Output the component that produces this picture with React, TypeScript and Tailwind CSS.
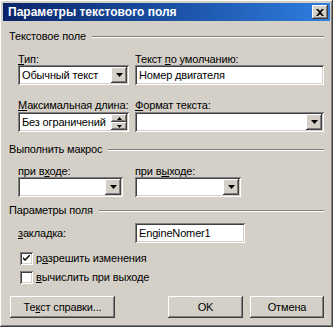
import React from 'react';

const raised =
  'bg-[#d4d0c8] shadow-[inset_-1px_-1px_#404040,inset_1px_1px_#ffffff,inset_-2px_-2px_#808080,inset_2px_2px_#d4d0c8]';
const sunken =
  'bg-white shadow-[inset_1px_1px_#808080,inset_-1px_-1px_#ffffff,inset_2px_2px_#404040,inset_-2px_-2px_#d4d0c8]';

const Arrow = () => (
  <svg width="7" height="4" viewBox="0 0 7 4">
    <path d="M0 0h7L3.5 4z" fill="#000" />
  </svg>
);

const DropBtn = () => (
  <div className={`w-4 h-full flex items-center justify-center ${raised}`}>
    <Arrow />
  </div>
);

const Select = ({ text, className }: { text?: string; className: string }) => (
  <div className={`h-[20px] flex items-stretch p-[2px] ${sunken} ${className}`}>
    <div className="flex-1 pl-[2px] flex items-center leading-none">{text}</div>
    <DropBtn />
  </div>
);

const Spinner = () => (
  <div className="w-4 h-full flex flex-col">
    <div className={`flex-1 flex items-center justify-center ${raised}`}>
      <svg width="5" height="3" viewBox="0 0 5 3"><path d="M2.5 0L5 3H0z" fill="#000" /></svg>
    </div>
    <div className={`flex-1 flex items-center justify-center ${raised}`}>
      <svg width="5" height="3" viewBox="0 0 5 3"><path d="M0 0h5L2.5 3z" fill="#000" /></svg>
    </div>
  </div>
);

const Group = ({ title }: { title: string }) => (
  <div className="flex items-center h-[13px]">
    <span className="pr-[6px]">{title}</span>
    <div className="flex-1 h-[2px] border-t border-t-[#808080] border-b border-b-white" />
  </div>
);

const Check = ({ checked }: { checked?: boolean }) => (
  <div className={`w-[13px] h-[13px] flex items-center justify-center ${sunken}`}>
    {checked && (
      <svg width="7" height="7" viewBox="0 0 7 7">
        <path d="M0 2l2 2 5-5v2l-5 5-2-2z" fill="#000" />
      </svg>
    )}
  </div>
);

const Btn = ({ children, className }: { children: React.ReactNode; className: string }) => (
  <div className={`h-[22px] flex items-center justify-center ${raised} ${className}`}>{children}</div>
);

export default function App() {
  return (
    <div
      className={`w-[333px] h-[327px] p-[3px] flex flex-col text-[11px] tracking-[-0.15px] text-black ${raised}`}
      style={{ fontFamily: '"Liberation Sans", Arial, sans-serif' }}
    >
      {/* Title bar */}
      <div className="h-[18px] flex items-center pl-[5px] pr-[2px] bg-gradient-to-r from-[#0a246a] to-[#2f7ee0]">
        <span className="flex-1 text-white font-bold text-[12px] tracking-normal">Параметры текстового поля</span>
        <div className={`w-4 h-[14px] flex items-center justify-center ${raised}`}>
          <svg width="8" height="7" viewBox="0 0 8 7">
            <path d="M0 0h2l2 2 2-2h2L5 3.5 8 7H6L4 5 2 7H0l3-3.5z" fill="#000" />
          </svg>
        </div>
      </div>

      <div className="flex-1 flex flex-col pl-[6px] pr-[6px] pt-[9px]">
        <Group title="Текстовое поле" />

        {/* type + default text */}
        <div className="flex pl-[9px] mt-[8px] gap-[6px]">
          <div className="flex flex-col w-[111px]">
            <span className="h-[14px]"><u>Т</u>ип:</span>
            <Select text="Обычный текст" className="w-[111px]" />
          </div>
          <div className="flex flex-col flex-1">
            <span className="h-[14px]">Текст <u>п</u>о умолчанию:</span>
            <div className={`h-[20px] flex items-center pl-[4px] ${sunken}`}>Номер двигателя</div>
          </div>
        </div>

        {/* max length + format */}
        <div className="flex pl-[9px] mt-[12px] gap-[6px]">
          <div className="flex flex-col w-[111px]">
            <span className="h-[15px] whitespace-nowrap"><u>М</u>аксимальная длина:</span>
            <div className={`h-[20px] flex items-stretch p-[2px] ${sunken}`}>
              <div className="flex-1 pl-[2px] flex items-center whitespace-nowrap overflow-hidden">Без ограничений</div>
              <Spinner />
            </div>
          </div>
          <div className="flex flex-col flex-1">
            <span className="h-[15px]"><u>Ф</u>ормат текста:</span>
            <Select className="w-full" />
          </div>
        </div>

        <div className="mt-[11px]">
          <Group title="Выполнить макрос" />
        </div>

        <div className="flex pl-[9px] mt-[7px] gap-[12px]">
          <div className="flex flex-col w-[105px]">
            <span className="h-[14px]">при в<u>х</u>оде:</span>
            <Select className="w-[105px]" />
          </div>
          <div className="flex flex-col w-[106px]">
            <span className="h-[14px]">при в<u>ы</u>ходе:</span>
            <Select className="w-[106px]" />
          </div>
        </div>

        <div className="mt-[7px]">
          <Group title="Параметры поля" />
        </div>

        <div className="flex items-center pl-[9px] mt-[6px]">
          <span className="w-[117px]"><u>з</u>акладка:</span>
          <div className={`w-[110px] h-[20px] flex items-center pl-[4px] ${sunken}`}>EngineNomer1</div>
        </div>

        <div className="flex items-center pl-[11px] mt-[7px] gap-[3px] h-[16px]">
          <Check checked />
          <span>р<u>а</u>зрешить изменения</span>
        </div>
        <div className="flex items-center pl-[11px] mt-[3px] gap-[3px] h-[16px]">
          <Check />
          <span><u>в</u>ычислить при выходе</span>
        </div>

        <div className="flex mt-[11px] pl-[1px] gap-[7px]">
          <Btn className="w-[105px]">Те<u>к</u>ст справки...</Btn>
          <div className="flex-1" />
          <Btn className="w-[75px]">OK</Btn>
          <Btn className="w-[74px]">Отмена</Btn>
        </div>
      </div>
    </div>
  );
}
